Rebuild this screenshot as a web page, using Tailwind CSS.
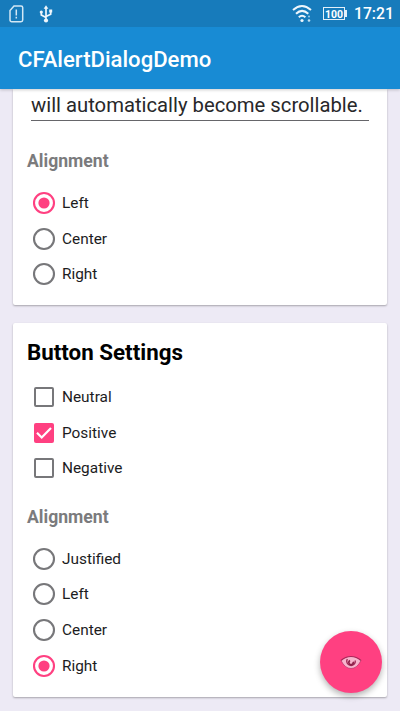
<!DOCTYPE html>
<html lang="en">
<head>
<meta charset="utf-8">
<title>CFAlertDialogDemo</title>
<script src="https://cdn.jsdelivr.net/npm/@tailwindcss/browser@4"></script>
</head>
<body class="w-[400px] h-[711px] overflow-hidden bg-[#edeaf5] font-[Roboto,sans-serif] text-[#1c1c1e]">
<div class="relative w-[400px] h-[711px] overflow-hidden flex flex-col">
  <header class="relative z-10 shrink-0 text-white shadow-[0_1px_3px_rgba(0,0,0,0.2)]">
    <div class="h-[27px] bg-[#177bbb] flex items-center pl-[9px] pr-[7px]">
      <svg class="w-[15px] h-[18px]" viewBox="0 0 15 18" fill="none" stroke="#d3e8f5" stroke-width="1.500"><path d="M5 .9h7a1.7 1.7 0 0 1 1.7 1.700v12.500a1.700 1.700 0 0 1-1.700 1.700H2.700A1.700 1.700 0 0 1 1 15.100V5.500z"/><path d="M7.300 4.500v6M7.300 11.700v1.800"/></svg>
      <svg class="ml-[15px] w-[14px] h-[18px]" viewBox="0 0 14 18" fill="none" stroke="#eef6fc" stroke-width="1.700"><path d="M7 3v12M7 12.500L2.300 10V7M7 11.500l4.700-2.300V6"/><path d="M7 .2l2.400 3.500H4.600z" fill="#eef6fc" stroke="none"/><circle cx="7" cy="15.500" r="2.100" fill="#eef6fc" stroke="none"/><circle cx="2.300" cy="7" r="1.600" fill="#eef6fc" stroke="none"/><path d="M10.200 4.500h3v3h-3z" fill="#eef6fc" stroke="none"/></svg>
      <svg class="ml-auto w-[21px] h-[19px]" viewBox="0 0 21 19" fill="none" stroke="#eef6fc" stroke-width="2"><path d="M1 6Q10 -2 19 6M4 9.800Q10 4 16.300 9.800M6.800 13.200Q10 10.300 13.400 13.200"/><circle cx="10" cy="16.500" r="1.600" fill="#eef6fc" stroke="none"/><circle cx="17" cy="16.500" r="1.300" fill="#c3dff0" stroke="none"/><circle cx="17" cy="12.500" r="1" fill="#9bcbe8" stroke="none"/></svg>
      <div class="ml-[10px] w-[22px] h-[13px] border border-[#e3f0f9] flex items-center justify-center text-[10.500px] leading-[11px] pt-px font-bold">100</div>
      <div class="w-[2px] h-[7px] bg-[#e3f0f9]"></div>
      <div class="ml-[7px] w-[39px] pt-px text-[15.700px] leading-none font-medium whitespace-nowrap">17:21</div>
    </div>
    <div class="h-[62px] bg-[#188bd4] flex items-center pl-[18px] pt-[2px]"><h1 class="text-[22.100px] font-medium leading-none whitespace-nowrap">CFAlertDialogDemo</h1></div>
  </header>

  <main class="flex flex-col gap-[18px] px-[13px]">
    <section class="h-[216px] shrink-0 bg-white rounded-b-[2px] shadow-[0_1px_2px_rgba(0,0,0,0.3)] pl-[14px] pr-[18px]">
      <div class="ml-[4px] h-[32px] border-b border-[#66666a] text-[20.250px] leading-[33px] whitespace-nowrap text-[#28282a]">will automatically become scrollable.</div>
      <h3 class="mt-[28px] h-[24px] text-[17.600px] leading-[24px] font-bold text-[#7b7b7d]">Alignment</h3>
      <div class="mt-[12.200px] pl-[5.400px] text-[15.400px]">
        <label class="h-[35.600px] flex items-center gap-[5.600px]"><svg class="w-6 h-6" viewBox="0 0 24 24"><circle cx="12" cy="12" r="10" fill="none" stroke="#ff4081" stroke-width="2.100"/><circle cx="12" cy="12" r="5.600" fill="#ff4081"/></svg><span class="pt-px">Left</span></label>
        <label class="h-[35.600px] flex items-center gap-[5.600px]"><svg class="w-6 h-6" viewBox="0 0 24 24"><circle cx="12" cy="12" r="10" fill="none" stroke="#77777a" stroke-width="2.100"/></svg><span class="pt-px">Center</span></label>
        <label class="h-[35.600px] flex items-center gap-[5.600px]"><svg class="w-6 h-6" viewBox="0 0 24 24"><circle cx="12" cy="12" r="10" fill="none" stroke="#77777a" stroke-width="2.100"/></svg><span class="pt-px">Right</span></label>
      </div>
    </section>

    <section class="h-[374px] shrink-0 bg-white rounded-[2px] shadow-[0_1px_2px_rgba(0,0,0,0.3)] pl-[14px]">
      <h2 class="pt-[15px] h-[43px] text-[22.350px] leading-[29px] font-bold text-black whitespace-nowrap">Button Settings</h2>
      <div class="mt-[13.400px] pl-[5.400px] text-[15.400px]">
        <label class="h-[35.600px] flex items-center gap-[5.600px]"><svg class="w-6 h-6" viewBox="0 0 24 24"><rect x="3" y="3" width="18" height="18" rx="1" fill="none" stroke="#77777a" stroke-width="2"/></svg><span class="pt-px">Neutral</span></label>
        <label class="h-[35.600px] flex items-center gap-[5.600px]"><svg class="w-6 h-6" viewBox="0 0 24 24"><rect x="2" y="2" width="20" height="20" rx="2" fill="#ff4081"/><path d="M5 11.800l4.700 4.700L19 7" fill="none" stroke="#fff" stroke-width="2.200"/></svg><span class="pt-px">Positive</span></label>
        <label class="h-[35.600px] flex items-center gap-[5.600px]"><svg class="w-6 h-6" viewBox="0 0 24 24"><rect x="3" y="3" width="18" height="18" rx="1" fill="none" stroke="#77777a" stroke-width="2"/></svg><span class="pt-px">Negative</span></label>
      </div>
      <h3 class="mt-[18.600px] h-[24px] text-[17.600px] leading-[24px] font-bold text-[#7b7b7d]">Alignment</h3>
      <div class="mt-[12.300px] pl-[5.400px] text-[15.400px]">
        <label class="h-[35.600px] flex items-center gap-[5.600px]"><svg class="w-6 h-6" viewBox="0 0 24 24"><circle cx="12" cy="12" r="10" fill="none" stroke="#77777a" stroke-width="2.100"/></svg><span class="pt-px">Justified</span></label>
        <label class="h-[35.600px] flex items-center gap-[5.600px]"><svg class="w-6 h-6" viewBox="0 0 24 24"><circle cx="12" cy="12" r="10" fill="none" stroke="#77777a" stroke-width="2.100"/></svg><span class="pt-px">Left</span></label>
        <label class="h-[35.600px] flex items-center gap-[5.600px]"><svg class="w-6 h-6" viewBox="0 0 24 24"><circle cx="12" cy="12" r="10" fill="none" stroke="#77777a" stroke-width="2.100"/></svg><span class="pt-px">Center</span></label>
        <label class="h-[35.600px] flex items-center gap-[5.600px]"><svg class="w-6 h-6" viewBox="0 0 24 24"><circle cx="12" cy="12" r="10" fill="none" stroke="#ff4081" stroke-width="2.100"/><circle cx="12" cy="12" r="5.600" fill="#ff4081"/></svg><span class="pt-px">Right</span></label>
      </div>
    </section>
  </main>

  <button class="absolute left-[320px] top-[631px] w-[62px] h-[62px] rounded-full bg-[#ff4081] shadow-[0_3px_6px_rgba(0,0,0,0.3)] flex items-center justify-center" aria-label="Preview">
    <svg class="w-[22px] h-[15px]" viewBox="0 0 22 15"><path d="M1 5.500Q5.500 1.500 11 1.500T21 5.500Q17 13.500 11 13.500T1 5.500z" fill="#f7b5cd"/><path d="M1 5.500Q5.500 1.500 11 1.500T21 5.500" fill="none" stroke="#a92558" stroke-width="1.200"/><path d="M1 5.500Q5 13.500 11 13.500T21 5.500" fill="none" stroke="#b93467" stroke-width=".7"/><path d="M7.300 4a4.300 4.300 0 1 0 8 1.500" fill="none" stroke="#a02a57" stroke-width="1.400"/><path d="M10 5.500a2.200 2.200 0 1 0 3.200 1.300" fill="none" stroke="#8e2049" stroke-width="1.600"/></svg>
  </button>
</div>
</body>
</html>
